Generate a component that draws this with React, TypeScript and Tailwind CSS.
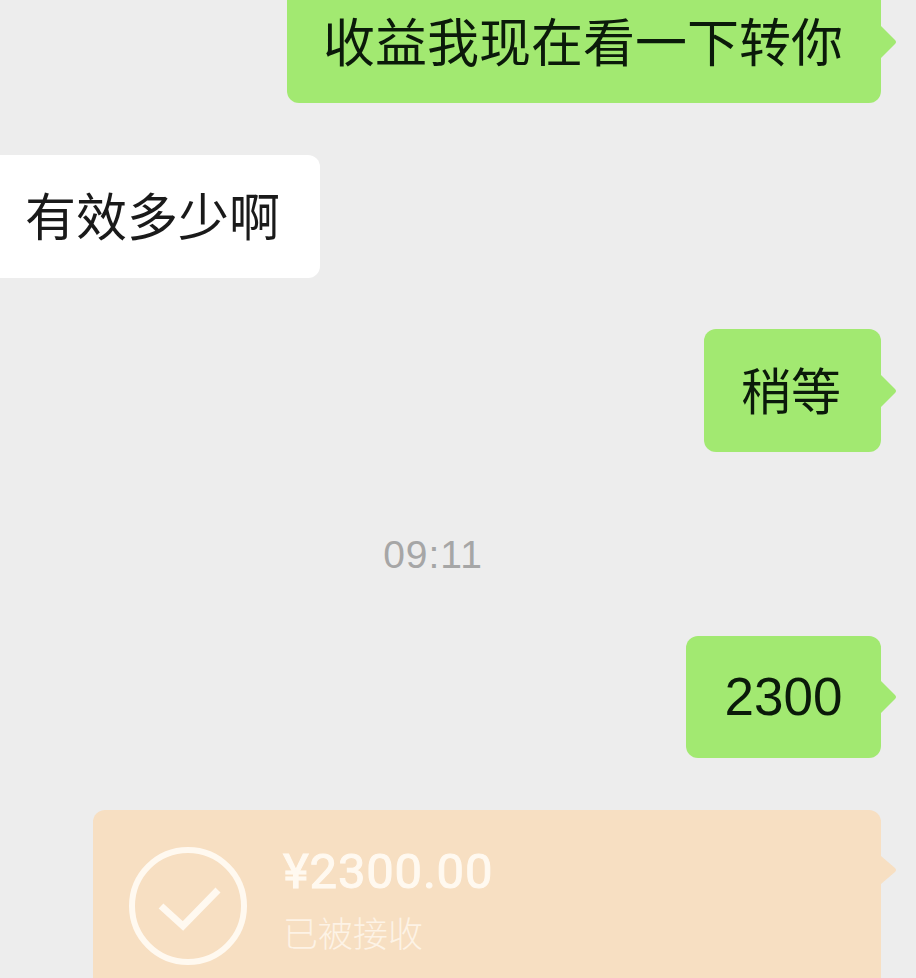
import type { ReactNode } from "react";

const cjk = "font-['Noto_Sans_CJK_SC','Liberation_Sans',sans-serif]";

function Tail({ color }: { color: string }) {
    return (
        <svg className="absolute left-full top-1/2 -translate-y-1/2" width="16" height="34" viewBox="0 0 16 34">
            <path d="M0 1 L14 15 Q16 17 14 19 L0 33 Z" fill={color} />
        </svg>
    );
}

function SentBubble({ children, className }: { children: ReactNode; className: string }) {
    return (
        <div className="flex justify-end pr-[35px]">
            <div className={`relative flex items-center justify-center rounded-xl bg-[#a2e971] text-[#0b1a0a] ${className}`}>
                {children}
                <Tail color="#a2e971" />
            </div>
        </div>
    );
}

export default function App() {
    return (
        <div className="flex h-[978px] w-[916px] flex-col overflow-hidden bg-[#ededed]">
            <SentBubble className={`-mt-[20px] h-[123px] w-[594px] pr-[2px] pb-[3px] text-[52px] ${cjk}`}>
                <span className="whitespace-nowrap">收益我现在看一下转你</span>
            </SentBubble>

            <div className="mt-[52px] flex">
                <div className={`flex h-[123px] w-[320px] items-center justify-end rounded-r-xl bg-white pr-[40px] pb-[5px] text-[51px] text-[#1a1a1a] ${cjk}`}>
                    有效多少啊
                </div>
            </div>

            <div className="mt-[51px]">
                <SentBubble className={`h-[123px] w-[177px] pr-[3px] pb-[5px] text-[50px] ${cjk}`}>稍等</SentBubble>
            </div>

            <div className="mt-[78px] flex h-[50px] items-center justify-center pr-[50px] font-['Liberation_Sans',sans-serif] text-[39px] tracking-[1px] text-[#a6a6a6]">
                09:11
            </div>

            <div className="mt-[56px]">
                <SentBubble className="h-[122px] w-[195px] font-['Liberation_Sans',sans-serif] text-[53px]">2300</SentBubble>
            </div>

            <div className="mt-[52px] flex justify-end pr-[35px]">
                <div className="relative h-[200px] w-[788px] rounded-t-xl bg-[#f7dfc2]">
                    <div className="absolute left-full top-[46px]">
                        <svg width="16" height="28" viewBox="0 0 16 28">
                            <path d="M0 0 L14 12 Q16 14 14 16 L0 28 Z" fill="#f7dfc2" />
                        </svg>
                    </div>
                    <div className="flex items-start gap-[36px] pl-[36px] pt-[37px]">
                        <svg width="118" height="120" viewBox="0 0 118 120" fill="none" stroke="#fff9f0" strokeWidth="6">
                            <circle cx="59" cy="59" r="56" />
                            <path d="M32 59 L54 79 L89 43" strokeWidth="7" />
                        </svg>
                        <div className="flex flex-col">
                            <span className="-mt-[3px] font-['Roboto',sans-serif] text-[49px] leading-[56px] tracking-[0.8px] text-[#fff9f0] [-webkit-text-stroke:1px_#fff9f0]">
                                ¥2300.00
                            </span>
                            <span className={`mt-[7px] text-[35px] leading-[50px] font-light text-[#fdf3e6] ${cjk}`}>已被接收</span>
                        </div>
                    </div>
                </div>
            </div>
        </div>
    );
}
